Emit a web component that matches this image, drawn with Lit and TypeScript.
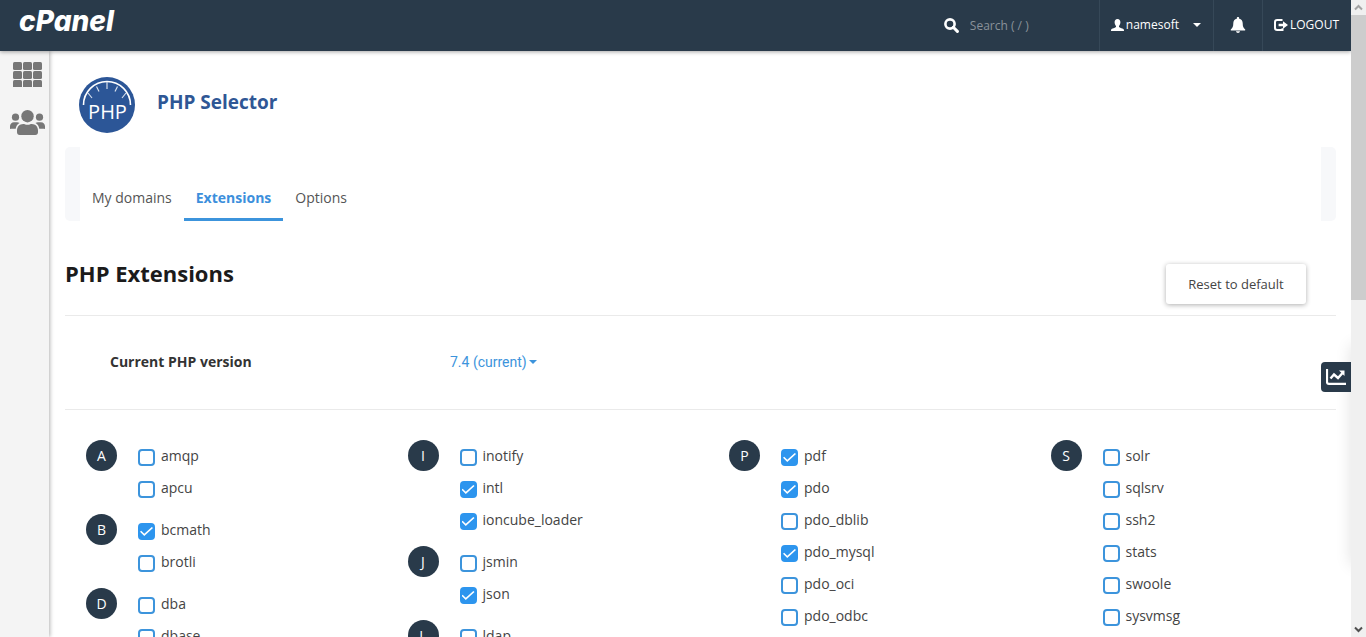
import { LitElement, html, css } from "lit";
import { customElement } from "lit/decorators.js";

type Group = { letter: string; items: [string, boolean][] };

const COLUMNS: Group[][] = [
  [
    { letter: "A", items: [["amqp", false], ["apcu", false]] },
    { letter: "B", items: [["bcmath", true], ["brotli", false]] },
    { letter: "D", items: [["dba", false], ["dbase", false]] },
  ],
  [
    { letter: "I", items: [["inotify", false], ["intl", true], ["ioncube_loader", true]] },
    { letter: "J", items: [["jsmin", false], ["json", true]] },
    { letter: "L", items: [["ldap", false]] },
  ],
  [
    {
      letter: "P",
      items: [["pdf", true], ["pdo", true], ["pdo_dblib", false], ["pdo_mysql", true], ["pdo_oci", false], ["pdo_odbc", false]],
    },
  ],
  [
    {
      letter: "S",
      items: [["solr", false], ["sqlsrv", false], ["ssh2", false], ["stats", false], ["swoole", false], ["sysvmsg", false]],
    },
  ],
];

@customElement("top-bar")
export class TopBar extends LitElement {
  static styles = css`
    :host {
      display: flex;
      justify-content: space-between;
      position: relative;
      z-index: 2;
      height: 51px;
      background: #293a4a;
      box-shadow: 0 1px 4px rgba(0, 0, 0, 0.35);
      color: #fff;
      font-size: 12px;
    }
    .logo {
      padding: 5px 0 0 19px;
      color: #fff;
      font: italic 800 28px/32px Inter, "Open Sans", sans-serif;
      text-decoration: none;
    }
    .tools {
      display: flex;
    }
    .search {
      display: flex;
      align-items: center;
      gap: 11px;
      width: 155px;
    }
    .search svg {
      flex: none;
    }
    .field {
      min-width: 0;
      width: 100%;
      padding: 0;
      border: 0;
      outline: 0;
      background: none;
      color: #fff;
      font: inherit;
      line-height: 20px;
    }
    .field::placeholder {
      color: #8a929a;
      opacity: 1;
    }
    .tool {
      display: flex;
      align-items: center;
      gap: 2px;
      box-sizing: border-box;
      padding: 0 12px 2px 11px;
      border: 0;
      border-left: 1px solid #364858;
      background: none;
      color: #fff;
      font: inherit;
      font-weight: 500;
      text-decoration: none;
    }
    .caret {
      margin-left: 12px;
    }
    .bell {
      padding: 0 16px 2px;
    }
    svg {
      display: block;
      fill: currentColor;
    }
  `;

  render() {
    return html`
      <a class="logo" href="#">cPanel</a>
      <div class="tools">
        <label class="search">
          <svg width="15" height="15" viewBox="0 0 15 15" aria-hidden="true">
            <circle cx="6" cy="6" r="4.6" fill="none" stroke="currentColor" stroke-width="2.6" />
            <path d="M9.3 9.3 13.4 13.4" stroke="currentColor" stroke-width="3" stroke-linecap="round" />
          </svg>
          <input class="field" type="text" placeholder="Search ( / )" aria-label="Search" />
        </label>
        <button class="tool" type="button">
          <svg width="13" height="12" viewBox="0 0 13 12" aria-hidden="true">
            <path d="M6.5 0C8.4 0 9.4 1.4 9.4 3.3 9.4 4.8 8.8 6.2 8 6.9V8c.6.9 4.4 1.4 4.9 2.7.1.4.1.9.1 1.300H0c0-.4 0-.9.1-1.300C.6 9.400 4.400 8.900 5 8V6.900C4.200 6.200 3.600 4.800 3.600 3.300 3.600 1.400 4.600 0 6.500 0Z" />
          </svg>
          <span>namesoft</span>
          <svg class="caret" width="8" height="4" viewBox="0 0 8 4" aria-hidden="true"><path d="M0 0h8L4 4Z" /></svg>
        </button>
        <button class="tool bell" type="button" aria-label="Notifications">
          <svg width="16" height="16" viewBox="0 0 16 16" aria-hidden="true">
            <path d="M8 0c.7 0 1.200.5 1.200 1.200v.5C11.500 2.200 12.700 4 12.700 6.200c0 3.300.8 4.800 2.300 6.100.6.5.3 1.300-.4 1.300H1.400c-.7 0-1-.8-.4-1.300C2.500 11 3.300 9.500 3.300 6.200 3.300 4 4.500 2.200 6.800 1.700v-.5C6.800.5 7.300 0 8 0ZM6 14.300h4C9.800 15.400 9 16 8 16s-1.800-.6-2-1.700Z" />
          </svg>
        </button>
        <a class="tool" href="#">
          <svg width="14" height="12" viewBox="0 0 14 12" aria-hidden="true">
            <path d="M8.500 1H3.200C1.800 1 1 1.800 1 3.200v5.600C1 10.200 1.800 11 3.200 11h5.300V9.300" fill="none" stroke="currentColor" stroke-width="2" />
            <path d="M9 2.200 14 6 9 9.800V7.300H4.600V4.700H9Z" />
          </svg>
          <span>LOGOUT</span>
        </a>
      </div>
    `;
  }
}

@customElement("side-nav")
export class SideNav extends LitElement {
  static styles = css`
    :host {
      display: flex;
      flex-direction: column;
      align-items: center;
      gap: 23px;
      flex: none;
      box-sizing: border-box;
      width: 49px;
      padding: 11px 0 0 6px;
      background: #f4f4f4;
      box-shadow: 1px 0 4px rgba(0, 0, 0, 0.3);
    }
    .link {
      color: #777;
    }
    svg {
      display: block;
      fill: currentColor;
    }
  `;

  render() {
    return html`
      <a class="link" href="#" aria-label="Tools">
        <svg width="29" height="25" viewBox="0 0 29 25">
          ${[0, 9, 18].map((y) => [0, 10, 20].map((x) => this.cell(x, y)))}
        </svg>
      </a>
      <a class="link" href="#" aria-label="User Manager">
        <svg width="35" height="25" viewBox="0 0 35 25">
          <circle cx="5.500" cy="7.200" r="3.600" />
          <circle cx="29.500" cy="7.200" r="3.600" />
          <circle cx="17.500" cy="6.200" r="6.200" />
          <path d="M0 19v-2.700C0 14 1.700 12.200 4 12.200h3c1 0 1.800.3 2.500.8C7.500 14.300 6 16 5.700 18.800H1Z" />
          <path d="M35 19v-2.700c0-2.300-1.700-4.100-4-4.100h-3c-1 0-1.800.3-2.500.8 2 1.300 3.500 3 3.800 5.800H34Z" />
          <path d="M7 22.300v-1.800c0-3.700 2.600-6.500 6.200-6.500 1.500 0 2.400.8 4.300.8s2.800-.8 4.300-.8c3.600 0 6.200 2.800 6.200 6.500v1.800c0 1.500-1 2.700-2.700 2.700H9.700C8 25 7 23.800 7 22.300Z" />
        </svg>
      </a>
    `;
  }

  private cell(x: number, y: number) {
    return html`<svg x=${x} y=${y} width="9" height="8"><rect width="9" height="8" rx="1.500" /></svg>`;
  }
}

@customElement("page-scrollbar")
export class PageScrollbar extends LitElement {
  static styles = css`
    :host {
      display: flex;
      flex-direction: column;
      flex: none;
      width: 15px;
      background: #f0f0f0;
    }
    .arrow {
      display: block;
      flex: none;
      fill: none;
      stroke: #505050;
      stroke-width: 2;
    }
    .up {
      stroke: #a3a3a3;
    }
    .track {
      flex: 1;
    }
    .thumb {
      height: 47%;
      background: #cdcdcd;
    }
  `;

  render() {
    return html`
      <svg class="arrow up" width="15" height="15" viewBox="0 0 15 15"><path d="M4 9.500 7.500 6 11 9.500" /></svg>
      <div class="track"><div class="thumb"></div></div>
      <svg class="arrow" width="15" height="15" viewBox="0 0 15 15"><path d="M4 5.500 7.500 9 11 5.500" /></svg>
    `;
  }
}

@customElement("extension-grid")
export class ExtensionGrid extends LitElement {
  static styles = css`
    :host {
      display: grid;
      grid-template-columns: repeat(4, 1fr);
      padding-top: 30px;
    }
    .column {
      display: flex;
      flex-direction: column;
      gap: 10px;
      padding-left: 21px;
    }
    .group {
      display: flex;
      gap: 21px;
    }
    .letter {
      flex: none;
      width: 31px;
      height: 31px;
      border-radius: 50%;
      background: #293a4a;
      color: #fff;
      font-size: 14px;
      line-height: 32px;
      text-align: center;
    }
    .items {
      margin: 0;
      padding: 0;
      list-style: none;
    }
    .item {
      display: flex;
      align-items: center;
      gap: 6px;
      height: 32px;
      color: #444;
      font-size: 14px;
      line-height: 20px;
    }
    .box {
      appearance: none;
      display: grid;
      place-items: center;
      box-sizing: border-box;
      width: 17px;
      height: 17px;
      margin: 3px 0 0;
      border: 2px solid #3c94dc;
      border-radius: 4px;
      background: #fff;
    }
    .box:checked {
      border-color: #2d95ee;
      background: #2d95ee;
    }
    .box:checked::before {
      content: "";
      width: 13px;
      height: 9px;
      background: #fff;
      clip-path: polygon(0 52%, 9% 41%, 33% 75%, 91% 0, 100% 10%, 33% 100%);
    }
  `;

  render() {
    return COLUMNS.map(
      (groups) => html`
        <div class="column">
          ${groups.map(
            (g) => html`
              <section class="group">
                <div class="letter">${g.letter}</div>
                <ul class="items">
                  ${g.items.map(
                    ([name, on]) => html`<li><label class="item"><input class="box" type="checkbox" ?checked=${on} />${name}</label></li>`
                  )}
                </ul>
              </section>
            `
          )}
        </div>
      `
    );
  }
}

@customElement("app-root")
export class AppRoot extends LitElement {
  static styles = css`
    :host {
      display: flex;
      height: 100vh;
      overflow: hidden;
      background: #fff;
      color: #333;
      font-family: "Open Sans", "Noto Sans", sans-serif;
      font-size: 14px;
      line-height: 20px;
    }
    .page {
      display: flex;
      flex-direction: column;
      flex: 1;
      position: relative;
      min-width: 0;
      overflow: hidden;
    }
    .body {
      display: flex;
      flex: 1;
      min-height: 0;
    }
    .main {
      flex: 1;
      min-width: 0;
      overflow: hidden;
      padding: 26px 0 0 16px;
    }
    .title {
      display: flex;
      align-items: center;
      gap: 22px;
      padding-left: 14px;
    }
    .badge {
      display: block;
    }
    .badge-text {
      font-family: "Open Sans", "Noto Sans", sans-serif;
      font-size: 20px;
      font-weight: 500;
    }
    .name {
      margin: 0;
      padding-bottom: 6px;
      color: #2f5795;
      font-size: 19px;
      font-weight: 700;
      line-height: 24px;
    }
    .tabs {
      margin: 14px 15px 0 0;
      padding: 0 15px;
      border-radius: 5px;
      background: #f7f8fa;
    }
    .tablist {
      display: flex;
      padding-top: 28px;
      background: #fff;
    }
    .tab {
      padding: 13px 12px 10px;
      border-bottom: 3px solid transparent;
      color: #555;
      text-decoration: none;
    }
    .tab.active {
      border-color: #3c94dc;
      color: #3c8fdc;
      font-weight: 700;
    }
    .heading {
      display: flex;
      align-items: flex-start;
      justify-content: space-between;
      margin-right: 15px;
      padding: 38px 30px 11px 0;
      border-bottom: 1px solid #eaeaea;
    }
    .heading h2 {
      margin: 0;
      color: #1b1b1b;
      font-size: 22px;
      font-weight: 700;
      line-height: 28px;
    }
    .reset {
      min-width: 140px;
      height: 40px;
      margin-top: 5px;
      padding: 0 20px;
      border: 0;
      border-radius: 3px;
      background: #fff;
      box-shadow: 0 1px 5px rgba(0, 0, 0, 0.32);
      color: #444;
      font: inherit;
      font-size: 13px;
    }
    .version {
      display: flex;
      align-items: center;
      box-sizing: border-box;
      height: 94px;
      margin-right: 15px;
      padding: 0 0 2px 45px;
      border-bottom: 1px solid #eaeaea;
    }
    .version-label {
      width: 340px;
      font-weight: 700;
    }
    .picker {
      display: flex;
      align-items: center;
      gap: 2px;
      color: #3c94dc;
    }
    .select {
      appearance: none;
      field-sizing: content;
      padding: 0;
      border: 0;
      background: none;
      color: inherit;
      font: 14px/20px Roboto, sans-serif;
    }
    .picker svg {
      fill: currentColor;
    }
    .drawer {
      position: absolute;
      top: 345px;
      left: 100%;
      width: 200px;
      height: 220px;
      box-shadow: 0 0 15px rgba(0, 0, 0, 0.12);
    }
    .stats {
      display: grid;
      place-items: center;
      position: absolute;
      top: 362px;
      right: 0;
      width: 30px;
      height: 30px;
      padding: 0;
      border: 0;
      border-radius: 4px 0 0 4px;
      background: #293a4a;
    }
  `;

  render() {
    return html`
      <div class="page">
        <top-bar></top-bar>
        <div class="body">
          <side-nav></side-nav>
          <main class="main">
            <header class="title">
              <svg class="badge" width="56" height="56" viewBox="0 0 56 56" aria-hidden="true">
                <circle cx="28" cy="28" r="28" fill="#2c5697" />
                <path d="M4.500 28a23.500 23.500 0 0 1 47 0" fill="none" stroke="#fff" stroke-width="1.600" />
                <path
                  d="M28 5v7M17.500 9.500l2.500 5M38.500 9.500l-2.500 5M9 16l4 5M47 16l-4 5"
                  fill="none"
                  stroke="#d5deec"
                  stroke-width="1.200"
                />
                <text class="badge-text" x="28.500" y="42" text-anchor="middle" fill="#fff">PHP</text>
              </svg>
              <h1 class="name">PHP Selector</h1>
            </header>
            <div class="tabs">
              <nav class="tablist">
                <a class="tab" href="#domains">My domains</a>
                <a class="tab active" href="#extensions">Extensions</a>
                <a class="tab" href="#options">Options</a>
              </nav>
            </div>
            <div class="heading">
              <h2>PHP Extensions</h2>
              <button class="reset" type="button">Reset to default</button>
            </div>
            <div class="version">
              <label class="version-label" for="version">Current PHP version</label>
              <span class="picker">
                <select class="select" id="version">
                  <option>7.4 (current)</option>
                </select>
                <svg width="8" height="4" viewBox="0 0 8 4" aria-hidden="true"><path d="M0 0h8L4 4Z" /></svg>
              </span>
            </div>
            <extension-grid></extension-grid>
          </main>
        </div>
        <div class="drawer"></div>
        <button class="stats" type="button" aria-label="Statistics">
          <svg width="20" height="16" viewBox="0 0 20 16" fill="none" stroke="#fff">
            <path d="M1 0v13c0 1 .5 1.800 1.800 1.800H20" stroke-width="2.200" />
            <path d="M4.500 9.500 8 5.500l4 3.500 4.500-5" stroke-width="2.400" />
            <path d="M13 1.500h5.500V7Z" fill="#fff" stroke="none" />
          </svg>
        </button>
      </div>
      <page-scrollbar></page-scrollbar>
    `;
  }
}
